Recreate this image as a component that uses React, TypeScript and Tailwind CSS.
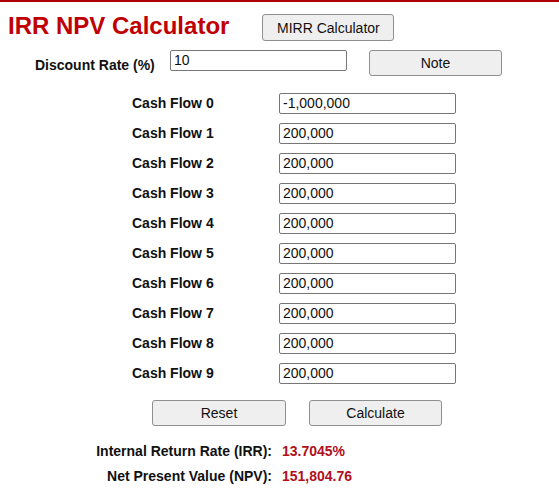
const font = "font-['Liberation_Sans',Arial,sans-serif]"

const flows = ['-1,000,000', '200,000', '200,000', '200,000', '200,000', '200,000', '200,000', '200,000', '200,000', '200,000']

const btn = 'h-[26px] rounded-[3px] border border-[#8f8f8f] bg-[#efefef] text-[14px] text-[#111] leading-none'
const input = 'h-[21px] border border-[#767676] rounded-[2px] bg-white px-[3px] text-[14px] text-[#111] outline-none'

export default function App() {
  return (
    <div className={`${font} min-h-[491px] w-[559px] bg-white border-t-2 border-[#b00000]`}>
      <div className="flex items-center pt-[9px]">
        <h1 className="pl-[8px] text-[24px] font-bold leading-[28px] text-[#c00000]">IRR NPV Calculator</h1>
        <button className={`${btn} ml-[33px] mt-[3px] w-[132px] h-[27px]`}>MIRR Calculator</button>
      </div>

      <div className="flex items-start mt-[9px]">
        <label className="ml-[35px] w-[135px] pt-[5px] text-[14px] font-bold text-[#111]">Discount Rate (%)</label>
        <input className={`${input} w-[177px]`} defaultValue="10" />
        <button className={`${btn} ml-[22px] w-[133px]`}>Note</button>
      </div>

      <div className="flex flex-col gap-[9px] mt-[17px]">
        {flows.map((v, i) => (
          <div key={i} className="flex items-center">
            <span className="ml-[132px] w-[147px] text-[14px] font-bold text-[#111]">Cash Flow {i}</span>
            <input className={`${input} w-[177px]`} defaultValue={v} />
          </div>
        ))}
      </div>

      <div className="flex mt-[16px] ml-[152px] gap-[23px]">
        <button className={`${btn} w-[134px]`}>Reset</button>
        <button className={`${btn} w-[133px]`}>Calculate</button>
      </div>

      <div className="mt-[15px] flex flex-col gap-[4px] text-[14px] font-bold">
        <div className="flex">
          <span className="w-[272px] text-right text-[#111]">Internal Return Rate (IRR):</span>
          <span className="ml-[10px] text-[#b0101c]">13.7045%</span>
        </div>
        <div className="flex">
          <span className="w-[272px] text-right text-[#111]">Net Present Value (NPV):</span>
          <span className="ml-[10px] text-[#b0101c]">151,804.76</span>
        </div>
      </div>
    </div>
  )
}
